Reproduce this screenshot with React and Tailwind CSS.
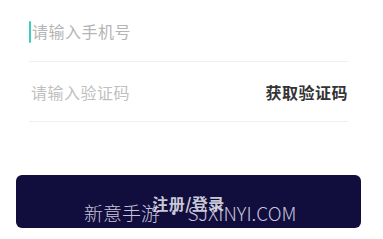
import React from 'react';

const font = { fontFamily: '"Noto Sans CJK SC", "Noto Sans", sans-serif' };

export default function App() {
  return (
    <div className="w-[383px] h-[239px] bg-white relative overflow-hidden" style={font}>
      <div className="pl-[29px] pr-[35px]">
        <div className="h-[62px] flex items-center border-b border-[#efefef]">
          <div className="w-[2px] h-[22px] bg-[#3ccfc0] rounded-sm mt-[2px]" />
          <span className="text-[16px] text-[#b5b5b5] ml-[1px] tracking-[0.5px]">请输入手机号</span>
        </div>
        <div className="h-[60px] flex items-center justify-between border-b border-[#efefef]">
          <span className="text-[16px] text-[#c0c0c0] ml-[2px] tracking-[0.5px]">请输入验证码</span>
          <span className="text-[16px] font-bold text-[#333333] tracking-[0.5px]">获取验证码</span>
        </div>
      </div>
      <div className="pl-[16px] pr-[22px] mt-[53px]">
        <button className="w-full h-[53px] rounded-[6px] bg-[#110d3d] flex items-center justify-center">
          <span className="text-[16px] font-bold text-[#c9c8d6] tracking-[0.5px] mt-[2px]">注册/登录</span>
        </button>
      </div>
      <div className="absolute left-[84px] top-[203px] text-[19px] font-light text-[#dcd8ea] leading-none opacity-90">
        新意手游 • SJXINYI.COM
      </div>
    </div>
  );
}
